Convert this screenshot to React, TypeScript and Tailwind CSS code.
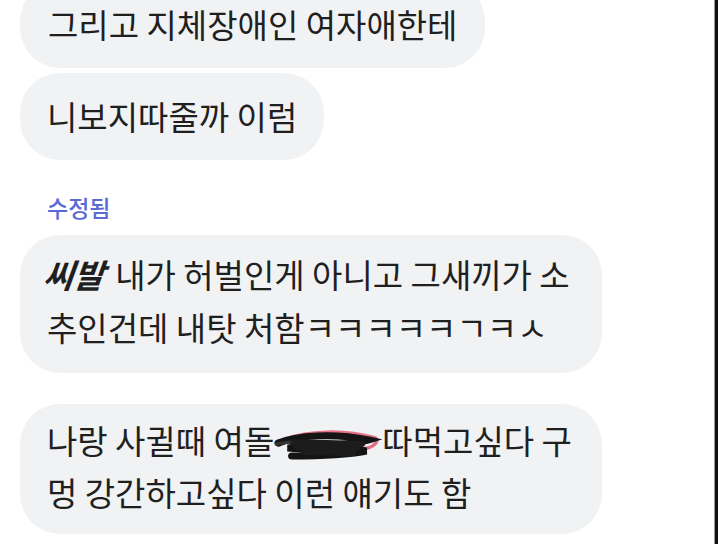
const font = "font-['Noto_Sans_CJK_KR','Noto_Sans',sans-serif]";

function Redacted() {
  return (
    <svg viewBox="0 0 96 36" preserveAspectRatio="none" className="inline-block h-[36px] w-[108px] align-middle -mt-[4px]">
      <path d="M10 14 C30 6, 62 4, 90 13 C93 18, 88 22, 80 24" stroke="#e0506a" strokeWidth="3.5" fill="none" strokeLinecap="round" opacity="0.8" />
      <path d="M4 18 C20 10, 55 8, 84 15 C70 20, 40 21, 12 23 C35 25, 66 23, 82 26 C60 31, 30 31, 16 31" stroke="#141414" strokeWidth="7" fill="none" strokeLinecap="round" />
      <path d="M16 17 L78 19 M20 22 L74 23 M26 27 L70 28" stroke="#1c1c1c" strokeWidth="6" strokeLinecap="round" />
      <path d="M2 19 L14 17" stroke="#333" strokeWidth="3" strokeLinecap="round" />
    </svg>
  );
}

export default function App() {
  return (
    <div className={`flex h-[544px] w-[718px] overflow-hidden bg-white text-[#1f1f1f] ${font}`}>
      <div className="flex flex-1 flex-col items-start pl-[20px]">
        <div className="-mt-[19px] whitespace-nowrap rounded-[40px] bg-[#f0f2f4] px-[28px] py-[16px] text-[33px] leading-[55px]">
          그리고 지체장애인 여자애한테
        </div>
        <div className="mt-[5px] whitespace-nowrap rounded-[40px] bg-[#f0f2f4] px-[27px] py-[16px] text-[33px] leading-[55px]">
          니보지따줄까 이럼
        </div>

        <div className="ml-[27px] mt-[35px] text-[23px] font-medium leading-[24px] text-[#5b6ad6]">수정됨</div>

        <div className="mt-[16px] w-[582px] whitespace-nowrap rounded-[40px] bg-[#f0f2f4] px-[27px] pb-[19px] pt-[13px] text-[33px] leading-[53px]">
          <span className="inline-block -skew-x-[20deg] font-semibold tracking-[0px]">씨발</span> 내가 허벌인게 아니고 그새끼가 소
          <br />
          추인건데 내탓 처함ㅋㅋㅋㅋㅋㄱㅋㅅ
        </div>

        <div className="mt-[31px] w-[582px] whitespace-nowrap rounded-[40px] bg-[#f0f2f4] px-[27px] pb-[16px] pt-[10px] text-[33px] leading-[52px]">
          나랑 사귈때 여돌<Redacted />따먹고싶다 구
          <br />
          멍 강간하고싶다 이런 얘기도 함
        </div>
      </div>
      <div className="w-px bg-[#9a9a9a]" />
      <div className="w-[3px] bg-[#111]" />
    </div>
  );
}
